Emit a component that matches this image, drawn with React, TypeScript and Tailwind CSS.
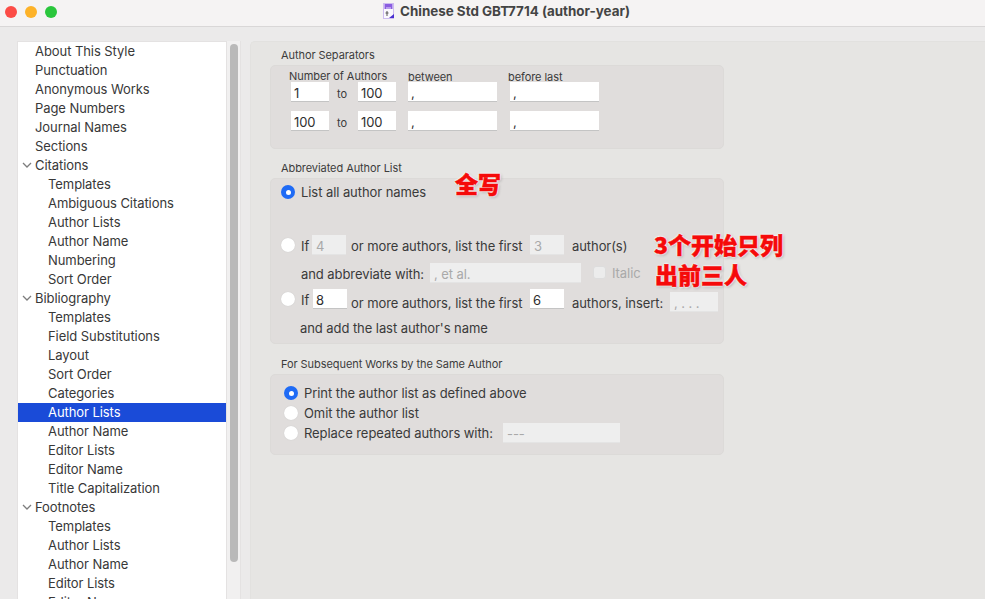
const font = "font-['Inter','Liberation_Sans',sans-serif]";

const sidebarItems: [string, number][] = [
  ["About This Style", 0],
  ["Punctuation", 0],
  ["Anonymous Works", 0],
  ["Page Numbers", 0],
  ["Journal Names", 0],
  ["Sections", 0],
  ["Citations", 2],
  ["Templates", 1],
  ["Ambiguous Citations", 1],
  ["Author Lists", 1],
  ["Author Name", 1],
  ["Numbering", 1],
  ["Sort Order", 1],
  ["Bibliography", 2],
  ["Templates", 1],
  ["Field Substitutions", 1],
  ["Layout", 1],
  ["Sort Order", 1],
  ["Categories", 1],
  ["Author Lists", 3],
  ["Author Name", 1],
  ["Editor Lists", 1],
  ["Editor Name", 1],
  ["Title Capitalization", 1],
  ["Footnotes", 2],
  ["Templates", 1],
  ["Author Lists", 1],
  ["Author Name", 1],
  ["Editor Lists", 1],
  ["Editor Name", 1],
];

const Chevron = () => (
  <svg width="10" height="6" viewBox="0 0 10 6" className="absolute left-[4px] top-[6px]">
    <path d="M1 1 L5 5 L9 1" fill="none" stroke="#7d7d7d" strokeWidth="1.3" />
  </svg>
);

const Sidebar = () => (
  <div className="flex h-full">
    <div className="w-[210px] bg-white border border-[#e4e2e2] border-b-0 overflow-hidden">
      {sidebarItems.map(([label, type], i) => (
        <div
          key={i}
          className={
            type === 3
              ? "relative h-[19px] leading-[19px] pl-[30px] bg-[#1a4bd8] text-white"
              : type === 1
                ? "relative h-[19px] leading-[19px] pl-[30px]"
                : "relative h-[19px] leading-[19px] pl-[17px]"
          }
        >
          {type === 2 && <Chevron />}
          {label}
        </div>
      ))}
    </div>
    <div className="w-[14px] bg-[#f1f0f0] border-r border-[#e4e2e2] pl-[3px] pt-[3px]">
      <div className="w-[8px] h-[518px] rounded-full bg-[#b9b9b9]" />
    </div>
  </div>
);

const Field = ({ value, className, dim }: { value: string; className: string; dim?: boolean }) => (
  <div
    className={
      dim
        ? `h-[20px] bg-[#eeeeee] border-b border-[#e4e4e4] pl-[4px] leading-[22px] text-[#a9a9a9] ${className}`
        : `h-[20px] bg-white border-b border-[#c4c4c4] pl-[3px] leading-[22px] text-[#2e2e2e] ${className}`
    }
  >
    {value}
  </div>
);

const Radio = ({ on, className }: { on?: boolean; className?: string }) => (
  <span
    className={
      on
        ? `shrink-0 w-[14px] h-[14px] rounded-full bg-[#1f6bf5] flex items-center justify-center ${className ?? ""}`
        : `shrink-0 w-[14px] h-[14px] rounded-full bg-white shadow-[0_0_1px_#bdbdbd] ${className ?? ""}`
    }
  >
    {on && <span className="w-[5px] h-[5px] rounded-full bg-white" />}
  </span>
);

const GroupTitle = ({ children }: { children: string }) => (
  <div className="h-[17px] leading-[19px] pl-[11px] text-[11px] text-[#3c3c3c]">{children}</div>
);

const Separators = () => (
  <div className="h-[84px] mt-[2px] rounded-[5px] bg-[#e0dddc] border border-[#dcdad8] text-[#3a3a3a]">
    <div className="flex h-[16px] text-[11px] leading-[20px]">
      <span className="ml-[18px] w-[119px]">Number of Authors</span>
      <span className="w-[100px] pt-px">between</span>
      <span className="pt-px">before last</span>
    </div>
    {[["1", "100"], ["100", "100"]].map(([from, to], i) => (
      <div key={i} className={i === 0 ? "flex items-center" : "flex items-center mt-[8px]"}>
        <Field value={from} className="w-[38px] ml-[20px]" />
        <span className="w-[29px] pr-[3px] text-center text-[11px] pt-[4px]">to</span>
        <Field value={to} className="w-[38px]" />
        <Field value="," className="w-[89px] ml-[12px]" />
        <Field value="," className="w-[89px] ml-[13px]" />
      </div>
    ))}
  </div>
);

const Abbreviated = () => (
  <div className="h-[166px] mt-[2px] rounded-[5px] bg-[#e0dddc] border border-[#dcdad8] text-[#3a3a3a]">
    <div className="flex items-center h-[20px] mt-[3px] pl-[10px] gap-[6px]">
      <Radio on />
      <span className="pt-[2px]">List all author names</span>
    </div>
    <div className="flex items-center h-[20px] mt-[33px] pl-[10px]">
      <Radio className="mr-[6px]" />
      <span className="w-[11px] pt-[3px]">If</span>
      <Field value="4" dim className="w-[34px]" />
      <span className="ml-[5px] w-[179px] pt-[4px]">or more authors, list the first</span>
      <Field value="3" dim className="w-[34px]" />
      <span className="ml-[8px] pt-[4px]">author(s)</span>
    </div>
    <div className="flex items-center h-[21px] mt-[7px] pl-[30px]">
      <span className="w-[129px] pt-[4px]">and abbreviate with:</span>
      <Field value=", et al." dim className="w-[151px]" />
      <span className="ml-[12px] w-[13px] h-[13px] rounded-[3px] bg-[#ececec] border border-[#dddddd]" />
      <span className="ml-[6px] pt-[3px] text-[#a9a9a9]">Italic</span>
    </div>
    <div className="flex items-center h-[20px] mt-[6px] pl-[10px]">
      <Radio className="mr-[6px]" />
      <span className="w-[12px] pt-[4px]">If</span>
      <Field value="8" className="w-[34px]" />
      <span className="ml-[4px] w-[179px] translate-y-[5px]">or more authors, list the first</span>
      <Field value="6" className="w-[34px]" />
      <span className="ml-[8px] w-[98px] translate-y-[5px]">authors, insert:</span>
      <Field value=", . . ." dim className="w-[48px] translate-y-[3px]" />
    </div>
    <div className="h-[20px] leading-[22px] mt-[8px] pl-[29px]">and add the last author's name</div>
  </div>
);

const Subsequent = () => (
  <div className="h-[81px] mt-[2px] rounded-[5px] bg-[#e0dddc] border border-[#dcdad8] text-[#3a3a3a] pt-[8px] pl-[13px]">
    <div className="flex items-center h-[20px] gap-[6px]">
      <Radio on />
      <span className="pt-[2px]">Print the author list as defined above</span>
    </div>
    <div className="flex items-center h-[20px] gap-[6px]">
      <Radio />
      <span className="pt-[2px]">Omit the author list</span>
    </div>
    <div className="flex items-center h-[20px] gap-[6px]">
      <Radio />
      <span className="w-[193px] pt-[2px]">Replace repeated authors with:</span>
      <Field value="---" dim className="w-[117px]" />
    </div>
  </div>
);

const annot =
  "absolute font-['Noto_Sans_CJK_SC',sans-serif] font-black text-[#f50a0a] whitespace-nowrap tracking-normal [-webkit-text-stroke:0.5px_#f50a0a] [text-shadow:0_0_2px_#fff,0_0_2px_#fff,0_0_2px_#fff,0_0_3px_#fff,1px_1px_3px_#888]";

export default function App() {
  return (
    <div className={`relative w-[985px] h-[599px] overflow-hidden flex flex-col bg-[#ebeaea] text-[13px] tracking-[-0.07px] whitespace-nowrap text-[#383838] ${font}`}>
      {/* title bar */}
      <div className="relative h-[27px] shrink-0 bg-[#f5f3f3] border-b border-[#d9d7d7] flex items-center justify-center">
        <div className="absolute left-[5px] top-[6px] flex gap-[8px]">
          <span className="w-[12px] h-[12px] rounded-full bg-[#fc4c46]" />
          <span className="w-[12px] h-[12px] rounded-full bg-[#fdb228]" />
          <span className="w-[12px] h-[12px] rounded-full bg-[#2ac63c]" />
        </div>
        <div className="flex items-center gap-[5px] mb-[4px] ml-[28px]">
          <svg width="12" height="16" viewBox="0 0 12 16">
            <rect x="0.5" y="0.5" width="10" height="15" fill="#faf8fd" stroke="#cdbcf0" />
            <rect x="1.5" y="1" width="8" height="5" fill="#8a5ce0" />
            <path d="M3 5h5" stroke="#e6dcfa" strokeWidth="1" />
            <path d="M2.5 10h3M4 8v5" stroke="#555" strokeWidth="1" />
            <path d="M6 15l5-4v4z" fill="#4a2fd0" />
          </svg>
          <span className="font-bold text-[#444444] text-[13.4px] tracking-normal">Chinese Std GBT7714 (author-year)</span>
        </div>
      </div>

      <div className="flex-1 min-h-0 flex pt-[14px] pl-[17px]">
        <Sidebar />
        <div className="ml-[9px] flex-1 bg-[#e6e5e3] rounded-tl-[5px] border-t border-l border-[#e2e1df] pl-[19px] pt-[4px]">
          <div className="w-[454px]">
            <GroupTitle>Author Separators</GroupTitle>
            <Separators />
            <div className="h-[10px]" />
            <GroupTitle>Abbreviated Author List</GroupTitle>
            <Abbreviated />
            <div className="h-[11px]" />
            <GroupTitle>For Subsequent Works by the Same Author</GroupTitle>
            <Subsequent />
          </div>
        </div>
      </div>

      {/* red annotations on top of the screenshot */}
      <div className={`${annot} left-[455px] top-[169px] text-[23px] leading-[28px]`}>全写</div>
      <div className={`${annot} left-[654px] top-[230px] text-[23px] leading-[28px]`}>3个开始只列</div>
      <div className={`${annot} left-[655px] top-[260px] text-[23px] leading-[28px]`}>出前三人</div>
    </div>
  );
}
